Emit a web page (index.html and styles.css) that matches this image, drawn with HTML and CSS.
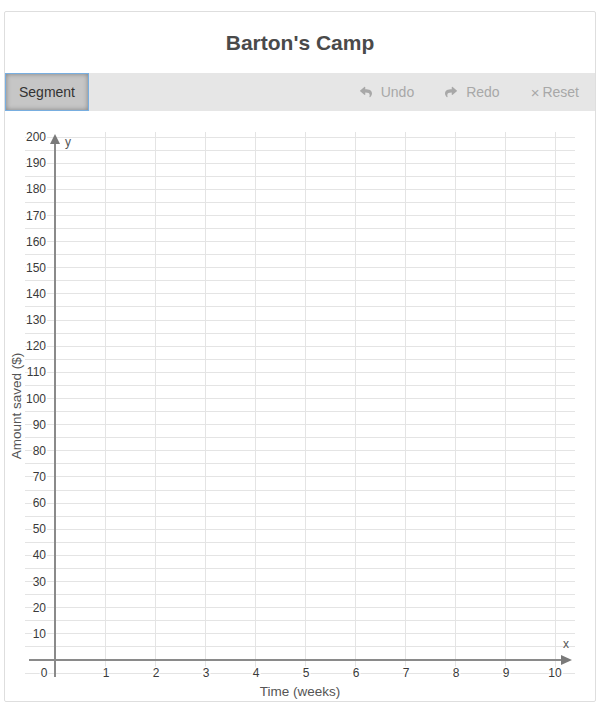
FILE: index.html
```html
<!DOCTYPE html>
<html>
<head>
<meta charset="utf-8">
<link rel="stylesheet" href="styles.css">
</head>
<body>
<div class="card">
  <div class="title-bar"><h1 class="title">Barton's Camp</h1></div>
  <div class="toolbar">
    <button class="tool active">Segment</button>
    <div class="actions">
      <button class="action">
        <svg class="icon" viewBox="0 0 512 512"><path d="M8.3 189.8L184.3 37.9C199.7 24.5 224 35.3 224 56v80c160.6 1.8 288 34 288 186.3 0 61.4-39.6 122.3-83.3 154.1-13.7 9.9-33.1-2.5-28.1-18.6 45.3-145-21.5-183.5-176.6-185.7V360c0 20.7-24.3 31.5-39.7 18.2l-176-152c-11.1-9.6-11.1-26.8 0-36.4z"/></svg>
        <span>Undo</span>
      </button>
      <button class="action">
        <svg class="icon" viewBox="0 0 512 512"><path d="M503.7 189.8L327.7 37.9C312.3 24.5 288 35.3 288 56v80C127.4 137.8 0 170 0 322.3c0 61.4 39.6 122.3 83.3 154.1 13.7 9.9 33.1-2.5 28.1-18.6-45.3-145 21.5-183.5 176.6-185.7V360c0 20.7 24.3 31.5 39.7 18.2l176-152c11.1-9.6 11.1-26.8 0-36.4z"/></svg>
        <span>Redo</span>
      </button>
      <button class="action reset">
        <span class="times">&#215;</span><span>Reset</span>
      </button>
    </div>
  </div>
  <svg class="board" width="590" height="589" viewBox="0 0 590 589">
    <path class="grid" d="M20 562.5H570M20 535.5H570M20 522.5H570M20 509.5H570M20 496.5H570M20 483.5H570M20 470.5H570M20 457.5H570M20 444.5H570M20 431.5H570M20 418.5H570M20 405.5H570M20 392.5H570M20 379.5H570M20 365.5H570M20 352.5H570M20 339.5H570M20 326.5H570M20 313.5H570M20 300.5H570M20 287.5H570M20 274.5H570M20 261.5H570M20 248.5H570M20 235.5H570M20 222.5H570M20 209.5H570M20 195.5H570M20 182.5H570M20 169.5H570M20 156.5H570M20 143.5H570M20 130.5H570M20 117.5H570M20 104.5H570M20 91.5H570M20 78.5H570M20 65.5H570M20 52.5H570M20 39.5H570M20 26.5H570"/>
    <path class="grid" d="M100.5 21V566M150.5 21V566M200.5 21V566M250.5 21V566M300.5 21V566M350.5 21V566M400.5 21V566M450.5 21V566M500.5 21V566M550.5 21V566"/>
    <g class="ylabels">
      <text x="41" y="30">200</text>
      <text x="41" y="56.2">190</text>
      <text x="41" y="82.3">180</text>
      <text x="41" y="108.5">170</text>
      <text x="41" y="134.6">160</text>
      <text x="41" y="160.8">150</text>
      <text x="41" y="186.9">140</text>
      <text x="41" y="213.1">130</text>
      <text x="41" y="239.2">120</text>
      <text x="41" y="265.4">110</text>
      <text x="41" y="291.5">100</text>
      <text x="41" y="317.7">90</text>
      <text x="41" y="343.8">80</text>
      <text x="41" y="370">70</text>
      <text x="41" y="396.1">60</text>
      <text x="41" y="422.3">50</text>
      <text x="41" y="448.4">40</text>
      <text x="41" y="474.6">30</text>
      <text x="41" y="500.7">20</text>
      <text x="41" y="526.9">10</text>
    </g>
    <g class="xlabels">
      <text x="39" y="566">0</text>
      <text x="101" y="566">1</text>
      <text x="151" y="566">2</text>
      <text x="201" y="566">3</text>
      <text x="251" y="566">4</text>
      <text x="301" y="566">5</text>
      <text x="351" y="566">6</text>
      <text x="401" y="566">7</text>
      <text x="451" y="566">8</text>
      <text x="501" y="566">9</text>
      <text x="550" y="566">10</text>
    </g>
    <path class="axis" d="M50 566V31M24 549H558"/>
    <path class="arrow" d="M50 23L55 33H45Z"/>
    <path class="arrow" d="M567 549L556 544V554Z"/>
    <text class="axis-name" x="60" y="35">y</text>
    <text class="axis-name" x="558" y="537">x</text>
    <text class="axis-title" transform="translate(15.5 295) rotate(-90)" x="0" y="0">Amount saved ($)</text>
    <text class="axis-title" x="295" y="585">Time (weeks)</text>
  </svg>
</div>
</body>
</html>
```
FILE: styles.css
```css
html, body {
  margin: 0;
  padding: 0;
  background: #fff;
  font-family: "Liberation Sans", Arial, sans-serif;
}
.card {
  margin: 11px 0 0 4px;
  width: 590px;
  height: 689px;
  border: 1px solid #dedede;
  border-radius: 2px;
  display: flex;
  flex-direction: column;
}
.title-bar {
  height: 61px;
  display: flex;
  align-items: center;
  justify-content: center;
}
.title {
  margin: 0;
  padding-top: 1px;
  font-size: 21px;
  font-weight: bold;
  color: #4a4a4a;
}
.toolbar {
  height: 38px;
  background: #e6e6e6;
  display: flex;
  align-items: stretch;
  justify-content: space-between;
}
.tool {
  font-family: inherit;
  font-size: 14px;
  color: #333;
  width: 84px;
  margin: 0;
  padding: 0;
  border: 1px solid #78aee0;
  background: #c6c6c6;
  box-shadow: inset 0 0 5px rgba(0,0,0,0.35);
  cursor: pointer;
}
.actions {
  display: flex;
  align-items: stretch;
}
.action {
  font-family: inherit;
  font-size: 14px;
  color: #a8a8a8;
  background: transparent;
  border: 0;
  padding: 0 15px 0 16px;
  display: flex;
  align-items: center;
  gap: 9px;
  cursor: pointer;
}
.action.reset {
  gap: 3px;
  padding-right: 16px;
}
.times {
  font-size: 15px;
}
.icon {
  width: 12px;
  height: 12px;
  fill: #a8a8a8;
}
.board {
  display: block;
}
.grid {
  stroke: #e4e4e4;
  stroke-width: 1;
  fill: none;
}
.axis {
  stroke: #8a8a8a;
  stroke-width: 2;
  fill: none;
}
.arrow {
  fill: #7a7a7a;
}
.ylabels text, .xlabels text {
  font-family: "Liberation Sans", Arial, sans-serif;
  font-size: 12px;
  fill: #3a3a3a;
  stroke: #fff;
  stroke-width: 3px;
  paint-order: stroke;
}
.ylabels text {
  text-anchor: end;
}
.xlabels text {
  text-anchor: middle;
}
.axis-name {
  font-family: "Liberation Sans", Arial, sans-serif;
  font-size: 12px;
  fill: #555;
}
.axis-title {
  font-family: "Liberation Sans", Arial, sans-serif;
  font-size: 13.5px;
  fill: #555;
  text-anchor: middle;
}
```
